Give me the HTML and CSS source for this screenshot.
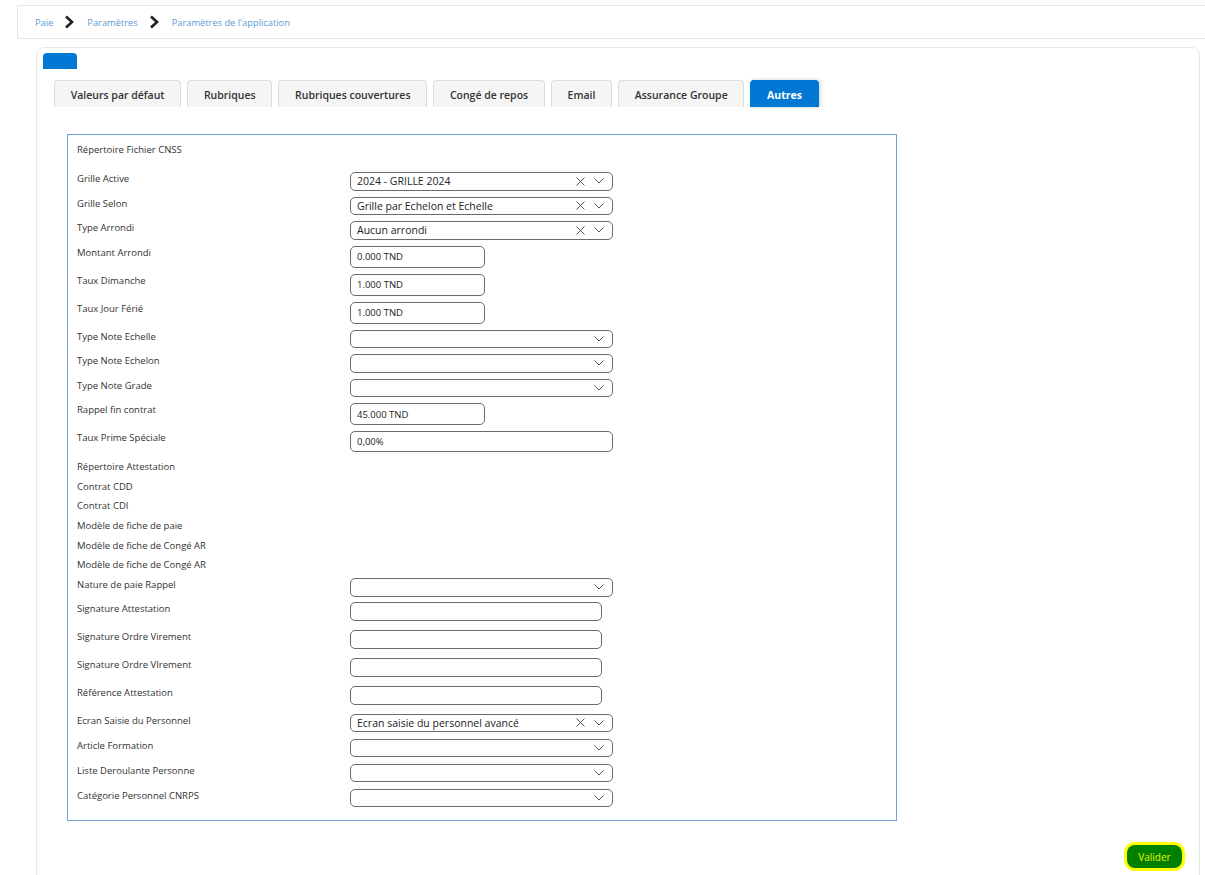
FILE: index.html
```html
<!DOCTYPE html>
<html>
<head>
  <title>Paramètres de l'application</title>
  <link rel="stylesheet" href="styles.css">
</head>
<body>
  <!-- fil d'ariane -->
  <div class="breadcrumb">
    <a class="crumb">Paie</a>
    <svg class="crumb-sep" width="10" height="14" viewBox="0 0 10 14"><polyline points="2,1.5 8,7 2,12.5" fill="none" stroke="#1f1f1f" stroke-width="2.6"/></svg>
    <a class="crumb">Paramètres</a>
    <svg class="crumb-sep" width="10" height="14" viewBox="0 0 10 14"><polyline points="2,1.5 8,7 2,12.5" fill="none" stroke="#1f1f1f" stroke-width="2.6"/></svg>
    <a class="crumb">Paramètres de l'application</a>
  </div>

  <div class="card">
    <div class="card-flag"></div>

    <!-- onglets -->
    <div class="tabs">
      <div class="tab">Valeurs par défaut</div>
      <div class="tab">Rubriques</div>
      <div class="tab">Rubriques couvertures</div>
      <div class="tab">Congé de repos</div>
      <div class="tab">Email</div>
      <div class="tab">Assurance Groupe</div>
      <div class="tab active">Autres</div>
    </div>

    <!-- formulaire "Autres" -->
    <div class="form-box">
      <div class="row row-first"><label>Répertoire Fichier CNSS</label></div>

      <div class="row">
        <label>Grille Active</label>
        <div class="select"><span class="select-value">2024 - GRILLE 2024</span><svg class="clear" width="9" height="9" viewBox="0 0 9 9"><path d="M0.5 0.5L8.5 8.5M8.5 0.5L0.5 8.5" stroke="#555" stroke-width="1"/></svg><svg class="caret" width="10" height="6" viewBox="0 0 10 6"><polyline points="0.5,0.5 5,5 9.5,0.5" fill="none" stroke="#555" stroke-width="1"/></svg></div>
      </div>
      <div class="row">
        <label>Grille Selon</label>
        <div class="select"><span class="select-value">Grille par Echelon et Echelle</span><svg class="clear" width="9" height="9" viewBox="0 0 9 9"><path d="M0.5 0.5L8.5 8.5M8.5 0.5L0.5 8.5" stroke="#555" stroke-width="1"/></svg><svg class="caret" width="10" height="6" viewBox="0 0 10 6"><polyline points="0.5,0.5 5,5 9.5,0.5" fill="none" stroke="#555" stroke-width="1"/></svg></div>
      </div>
      <div class="row">
        <label>Type Arrondi</label>
        <div class="select"><span class="select-value">Aucun arrondi</span><svg class="clear" width="9" height="9" viewBox="0 0 9 9"><path d="M0.5 0.5L8.5 8.5M8.5 0.5L0.5 8.5" stroke="#555" stroke-width="1"/></svg><svg class="caret" width="10" height="6" viewBox="0 0 10 6"><polyline points="0.5,0.5 5,5 9.5,0.5" fill="none" stroke="#555" stroke-width="1"/></svg></div>
      </div>
      <div class="row">
        <label>Montant Arrondi</label>
        <input class="input input-sm" type="text" value="0.000 TND">
      </div>
      <div class="row">
        <label>Taux Dimanche</label>
        <input class="input input-sm" type="text" value="1.000 TND">
      </div>
      <div class="row">
        <label>Taux Jour Férié</label>
        <input class="input input-sm" type="text" value="1.000 TND">
      </div>
      <div class="row">
        <label>Type Note Echelle</label>
        <div class="select"><span class="select-value"></span><svg class="caret" width="10" height="6" viewBox="0 0 10 6"><polyline points="0.5,0.5 5,5 9.5,0.5" fill="none" stroke="#555" stroke-width="1"/></svg></div>
      </div>
      <div class="row">
        <label>Type Note Echelon</label>
        <div class="select"><span class="select-value"></span><svg class="caret" width="10" height="6" viewBox="0 0 10 6"><polyline points="0.5,0.5 5,5 9.5,0.5" fill="none" stroke="#555" stroke-width="1"/></svg></div>
      </div>
      <div class="row">
        <label>Type Note Grade</label>
        <div class="select"><span class="select-value"></span><svg class="caret" width="10" height="6" viewBox="0 0 10 6"><polyline points="0.5,0.5 5,5 9.5,0.5" fill="none" stroke="#555" stroke-width="1"/></svg></div>
      </div>
      <div class="row">
        <label>Rappel fin contrat</label>
        <input class="input input-sm" type="text" value="45.000 TND">
      </div>
      <div class="row row-before-text">
        <label>Taux Prime Spéciale</label>
        <input class="input input-full" type="text" value="0,00%">
      </div>

      <div class="row row-text"><label>Répertoire Attestation</label></div>
      <div class="row row-text"><label>Contrat CDD</label></div>
      <div class="row row-text"><label>Contrat CDI</label></div>
      <div class="row row-text"><label>Modèle de fiche de paie</label></div>
      <div class="row row-text"><label>Modèle de fiche de Congé AR</label></div>
      <div class="row row-text"><label>Modèle de fiche de Congé AR</label></div>

      <div class="row row-tight">
        <label>Nature de paie Rappel</label>
        <div class="select"><span class="select-value"></span><svg class="caret" width="10" height="6" viewBox="0 0 10 6"><polyline points="0.5,0.5 5,5 9.5,0.5" fill="none" stroke="#555" stroke-width="1"/></svg></div>
      </div>
      <div class="row row-loose">
        <label>Signature Attestation</label>
        <input class="input input-md" type="text">
      </div>
      <div class="row row-loose">
        <label>Signature Ordre Virement</label>
        <input class="input input-md" type="text">
      </div>
      <div class="row row-loose">
        <label>Signature Ordre VIrement</label>
        <input class="input input-md" type="text">
      </div>
      <div class="row row-loose">
        <label>Référence Attestation</label>
        <input class="input input-md" type="text">
      </div>
      <div class="row row-wide">
        <label>Ecran Saisie du Personnel</label>
        <div class="select"><span class="select-value">Ecran saisie du personnel avancé</span><svg class="clear" width="9" height="9" viewBox="0 0 9 9"><path d="M0.5 0.5L8.5 8.5M8.5 0.5L0.5 8.5" stroke="#555" stroke-width="1"/></svg><svg class="caret" width="10" height="6" viewBox="0 0 10 6"><polyline points="0.5,0.5 5,5 9.5,0.5" fill="none" stroke="#555" stroke-width="1"/></svg></div>
      </div>
      <div class="row row-wide">
        <label>Article Formation</label>
        <div class="select"><span class="select-value"></span><svg class="caret" width="10" height="6" viewBox="0 0 10 6"><polyline points="0.5,0.5 5,5 9.5,0.5" fill="none" stroke="#555" stroke-width="1"/></svg></div>
      </div>
      <div class="row row-wide">
        <label>Liste Deroulante Personne</label>
        <div class="select"><span class="select-value"></span><svg class="caret" width="10" height="6" viewBox="0 0 10 6"><polyline points="0.5,0.5 5,5 9.5,0.5" fill="none" stroke="#555" stroke-width="1"/></svg></div>
      </div>
      <div class="row">
        <label>Catégorie Personnel CNRPS</label>
        <div class="select"><span class="select-value"></span><svg class="caret" width="10" height="6" viewBox="0 0 10 6"><polyline points="0.5,0.5 5,5 9.5,0.5" fill="none" stroke="#555" stroke-width="1"/></svg></div>
      </div>
    </div>

    <div class="actions">
      <button class="btn-valider">Valider</button>
    </div>
  </div>
</body>
</html>
```

FILE: styles.css
```css
/* mise en page générale */
body {
  margin: 0;
  background: #fff;
  font-family: "Open Sans", "Noto Sans", sans-serif;
  color: #333;
}

/* fil d'ariane */
.breadcrumb {
  display: flex;
  align-items: center;
  height: 32px;
  margin: 5px 0 0 17px;
  padding-left: 17px;
  border: 1px solid #e6e6e6;
  border-right: none;
  font-size: 9.3px;
}

.crumb {
  color: #5b9bd5;
}

.crumb-sep {
  margin: 0 13px 0 11px;
}

/* carte principale */
.card {
  margin: 8px 5px 0 36px;
  min-height: 840px;
  border: 1px solid #e8e8e8;
  border-radius: 8px;
}

.card-flag {
  width: 34px;
  height: 16px;
  margin: 5px 0 0 6px;
  background: #0078d4;
  border-radius: 4px 4px 0 0;
}

/* onglets */
.tabs {
  display: flex;
  gap: 6px;
  margin: 11px 0 0 17px;
}

.tab {
  height: 26px;
  padding: 0 15.7px;
  line-height: 28px;
  background: #f5f5f5;
  border: 1px solid #dcdcdc;
  border-bottom: none;
  border-radius: 4px 4px 0 0;
  font-size: 10.5px;
  font-weight: 600;
  color: #333;
}

.tab.active {
  background: #0078d4;
  border-color: #0078d4;
  color: #fff;
  font-weight: 700;
  box-shadow: 1px 0 4px rgba(0, 0, 0, 0.2);
}

/* bloc du formulaire */
.form-box {
  width: 819px;
  margin: 27px 0 0 30px;
  padding: 8px 0 13px 9px;
  border: 1px solid #6fa3d8;
}

.row {
  display: flex;
  align-items: flex-start;
  margin-bottom: 6px;
}

.row:last-child {
  margin-bottom: 0;
}

.row-first {
  margin-bottom: 15px;
}

.row-before-text {
  margin-bottom: 8px;
}

.row-text {
  margin-bottom: 5.7px;
}

.row-tight {
  margin-bottom: 5px;
}

.row-loose {
  margin-bottom: 9px;
}

.row-wide {
  margin-bottom: 6.5px;
}

.row label {
  width: 273px;
  flex-shrink: 0;
  line-height: 14px;
  font-size: 9.5px;
  color: #333;
}

/* champs */
.input {
  box-sizing: border-box;
  height: 22px;
  padding: 0 6px;
  border: 1px solid #6b6b6b;
  border-radius: 5px;
  font-family: "Open Sans", "Noto Sans", sans-serif;
  font-size: 9.5px;
  color: #222;
  outline: none;
}

.input-sm {
  width: 135px;
}

.input-md {
  width: 252px;
  height: 19px;
}

.input-full {
  width: 263px;
  height: 21px;
}

.select {
  box-sizing: border-box;
  display: flex;
  align-items: center;
  width: 263px;
  height: 18.5px;
  padding: 0 6px;
  border: 1px solid #6b6b6b;
  border-radius: 5px;
  font-size: 10.5px;
  color: #222;
}

.select-value {
  flex: 1;
  white-space: nowrap;
}

.clear {
  margin-right: 9px;
}

.caret {
  margin-right: 2px;
}

/* bouton de validation */
.actions {
  display: flex;
  justify-content: flex-end;
  margin: 24px 17px 0 0;
}

.btn-valider {
  width: 55px;
  height: 23px;
  background: #008000;
  border: none;
  border-radius: 8px;
  box-shadow: 0 0 0 3px #ffff00;
  font-family: "Open Sans", "Noto Sans", sans-serif;
  font-size: 10px;
  color: #e8f500;
}
```
